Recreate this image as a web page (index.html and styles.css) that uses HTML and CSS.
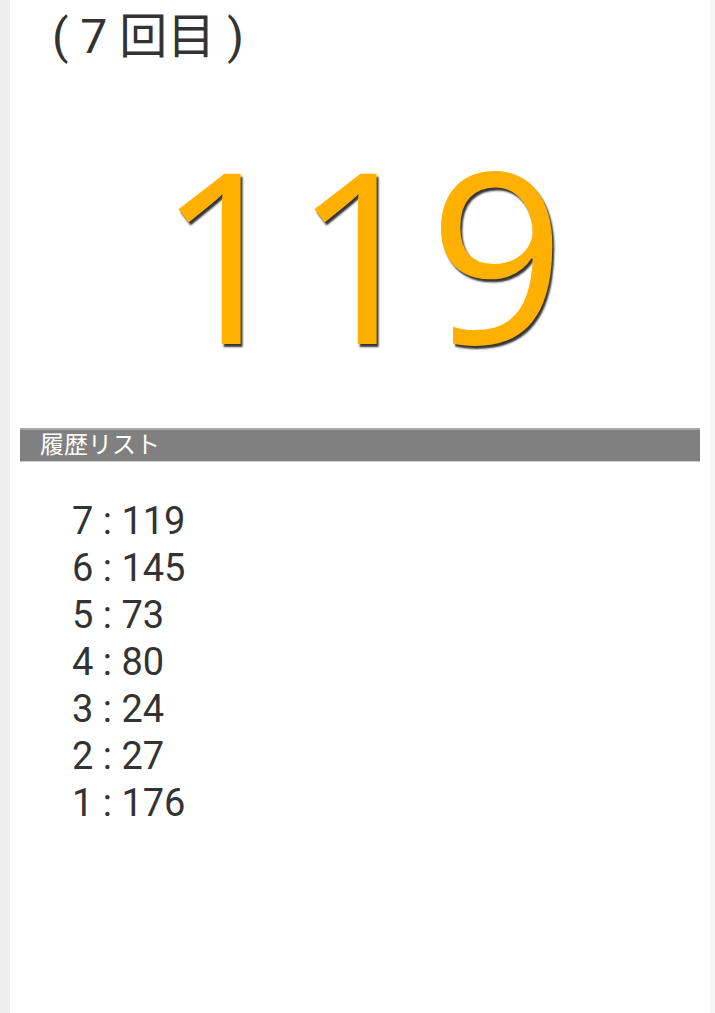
FILE: index.html
```html
<!doctype html>
<html lang="ja">
<head>
  <meta charset="UTF-8"/>
  <meta content="width=device-width, initial-scale=1" name="viewport">
  <title>履歴リスト</title>
  <link rel="stylesheet" href="styles.css">
</head>
<body>
<div class="screen">
  <div class="count">( 7 回目 )</div>
  <div class="result">119</div>
  <div class="history-head">履歴リスト</div>
  <ul class="history">
    <li>7 : 119</li>
    <li>6 : 145</li>
    <li>5 : 73</li>
    <li>4 : 80</li>
    <li>3 : 24</li>
    <li>2 : 27</li>
    <li>1 : 176</li>
  </ul>
</div>
</body>
</html>
```

FILE: styles.css
```css
*, *:before {
  box-sizing: border-box;
}

html, body {
  margin: 0;
  height: 100%;
}

body {
  background: #eeeeee;
  font-family: Roboto, "Noto Sans CJK JP", sans-serif;
  color: #333333;
}

.screen {
  margin-left: 10px;
  width: 705px;
  min-height: 100%;
  background: #ffffff;
  border-right: 5px solid #f5f5f5;
  padding: 0 10px;
}

.count {
  font-size: 48px;
  line-height: 1;
  padding: 13px 0 0 32px;
  height: 100px;
}

.result {
  font-family: "Open Sans", sans-serif;
  font-weight: 500;
  font-size: 238px;
  line-height: 1;
  color: #ffb000;
  text-align: center;
  text-shadow: 2px 3px 2px rgba(0, 0, 0, 0.8);
  height: 328px;
  padding: 33px 0 0 2px;
}

.history-head {
  background: #808080;
  border-top: 2px solid #a8a8a8;
  border-bottom: 1px solid #d0d0d0;
  color: #ffffff;
  font-size: 24px;
  line-height: 30px;
  padding-left: 20px;
  height: 34px;
}

.history {
  list-style: none;
  margin: 0;
  padding: 36px 0 0 52px;
  font-size: 38px;
  line-height: 47px;
}
```
